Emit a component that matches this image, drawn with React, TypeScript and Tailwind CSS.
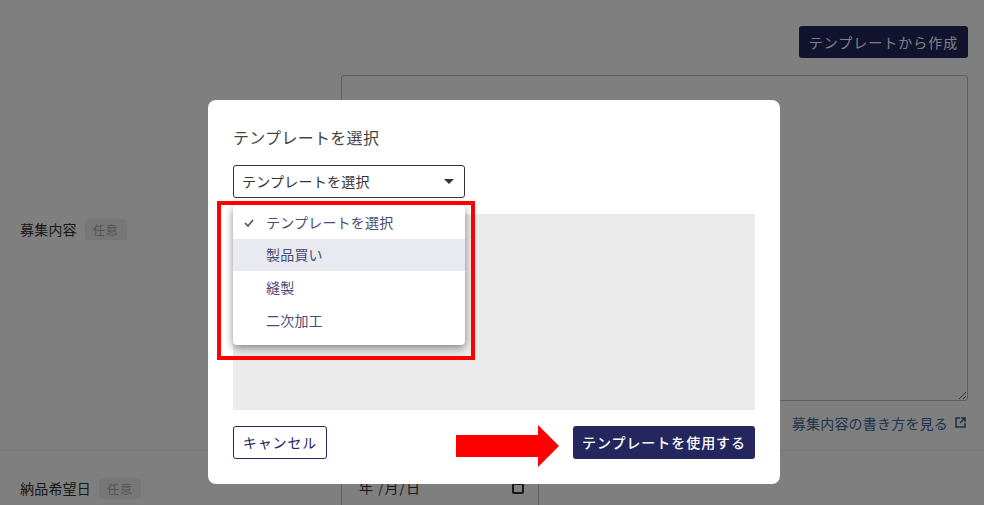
import React from "react";

const font = { fontFamily: '"Noto Sans CJK JP", "Noto Sans", sans-serif' };

function Tag() {
  return <span className="rounded-[3px] bg-[#eeeeee] px-[8px] text-[12px] leading-[21px] tracking-[1px] text-[#aaaaaa]">任意</span>;
}

export default function App() {
  const items = ["テンプレートを選択", "製品買い", "縫製", "二次加工"];
  return (
    <div style={font} className="relative h-[505px] w-[984px] overflow-hidden bg-white text-[#333333]">
      {/* page underneath */}
      <div className="flex flex-col">
        <div className="flex justify-end pr-[16px] pt-[26px]">
          <button className="h-[32px] w-[169px] rounded-[3px] bg-[#25265e] text-[14px] tracking-[1px] text-white">テンプレートから作成</button>
        </div>
        <div className="mt-[17px] flex h-[326px] items-center pl-[20px] pr-[16px]">
          <div className="flex w-[321px] items-center gap-[8px] pb-[18px]">
            <span className="text-[14px] tracking-[0.2px]">募集内容</span>
            <Tag />
          </div>
          <textarea className="h-[326px] flex-1 rounded-[3px] border border-[#bbbbbb] bg-white" />
        </div>
        <div className="flex h-[50px] items-start justify-end gap-[7px] border-b border-[#eeeeee] pr-[18px] pt-[12px] text-[14px] leading-[20px] tracking-[0.2px] text-[#3e6a99]">
          <span>募集内容の書き方を見る</span>
          <svg width="11" height="11" viewBox="0 0 11 11" fill="none" stroke="#2f6090" strokeWidth="1.5" className="mt-[4px]">
            <path d="M5 1H1v9h9V6" />
            <path d="M6 1h4v4M10 1 5 6" />
          </svg>
        </div>
        <div className="flex items-start pl-[20px] pr-[16px] pt-[15px]">
          <div className="flex w-[321px] items-center gap-[8px] pt-[12px]">
            <span className="text-[14px] tracking-[0.2px]">納品希望日</span>
            <Tag />
          </div>
          <div className="flex h-[60px] w-[198px] items-start justify-between border border-[#bbbbbb] pl-[17px] pr-[14px] pt-[10px] text-[14px] tracking-[1px]">
            <span>年 /月/日</span>
            <span className="mt-[6px] h-[11px] w-[12px] rounded-[2px] border-2 border-[#333333]" />
          </div>
        </div>
      </div>

      {/* backdrop */}
      <div className="absolute inset-0 bg-black/50" />

      {/* modal */}
      <div className="absolute left-[208px] top-[100px] flex h-[384px] w-[572px] flex-col rounded-[8px] bg-white px-[25px] pt-[25px]">
        <h2 className="text-[16px] leading-[24px] tracking-[0.3px] text-[#444444]">テンプレートを選択</h2>
        <div className="mt-[16px] flex h-[33px] w-[232px] items-center justify-between rounded-[3px] border border-[#333333] pl-[8px] pr-[10px] text-[14px] tracking-[0.25px]">
          <span>テンプレートを選択</span>
          <svg width="10" height="5" viewBox="0 0 10 5"><path d="M0 0h10L5 5z" fill="#333333" /></svg>
        </div>
        <div className="mt-[16px] h-[196px] bg-[#ebebeb]" />
        <div className="mt-[16px] flex items-center justify-between">
          <button className="h-[33px] w-[94px] rounded-[3px] border border-[#25265e] text-[14px] tracking-[0.9px] text-[#25265e]">キャンセル</button>
          <button className="h-[33px] w-[182px] rounded-[3px] bg-[#25265e] text-[14px] font-medium tracking-[0.95px] text-white">テンプレートを使用する</button>
        </div>
      </div>

      {/* dropdown */}
      <div className="absolute left-[233px] top-[205px] h-[140px] w-[232px] rounded-[4px] bg-white pt-[1px] text-[14px] tracking-[0.2px] text-[#4a4b78] shadow-[0_3px_8px_rgba(0,0,0,0.45)]">
        {items.map((t, i) => (
          <div key={t} className={`relative flex h-[32.6px] items-center pl-[33px] ${i === 1 ? "bg-[#e8eaef]" : ""}`}>
            {i === 0 && (
              <svg width="10" height="8" viewBox="0 0 10 8" fill="none" stroke="#4a4b78" strokeWidth="1.6" className="absolute left-[11px] top-[13px]">
                <path d="M1 4l3 3 5-6" />
              </svg>
            )}
            {t}
          </div>
        ))}
      </div>

      {/* annotations */}
      <div className="absolute left-[217px] top-[201px] h-[159px] w-[258px] border-4 border-[#ff0000]" />
      <svg className="absolute left-[456px] top-[424px]" width="104" height="44" viewBox="0 0 104 44">
        <path d="M0 11h82V1l21 21-21 21V33H0z" fill="#ff0000" />
      </svg>
    </div>
  );
}
